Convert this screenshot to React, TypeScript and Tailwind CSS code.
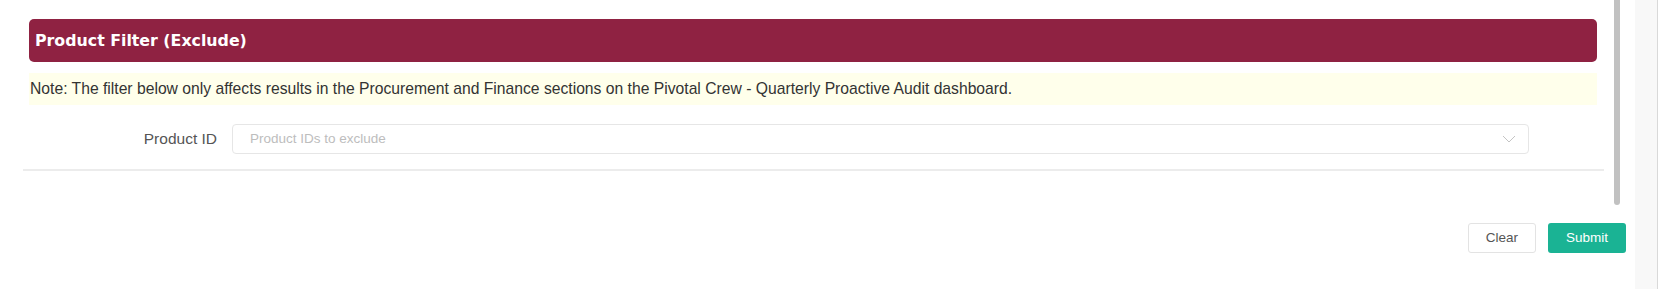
export default function App() {
  return (
    <div className="flex h-[289px] w-[1659px] overflow-hidden bg-white font-['Liberation_Sans',Arial,sans-serif]">
      {/* Main panel */}
      <div className="flex w-[1635px] flex-col">
        <div className="flex h-[205px]">
          <div className="ml-[23px] flex w-[1581px] flex-col">
            {/* Section header */}
            <div className="ml-[6px] mr-[7px] mt-[19px] flex h-[43px] items-center rounded-[5px] bg-[#8f2242] pl-[6px]">
              <span className="font-['DejaVu_Sans',Verdana,sans-serif] text-[15.8px] font-bold text-white">
                Product Filter (Exclude)
              </span>
            </div>

            {/* Note */}
            <div className="ml-[6px] mr-[7px] mt-[11px] flex h-[32px] items-center bg-[#ffffeb] pl-[1px] text-[15.7px] text-[#333]">
              Note: The filter below only affects results in the Procurement and Finance sections on the Pivotal Crew - Quarterly Proactive Audit dashboard.
            </div>

            {/* Form row */}
            <div className="mt-[19px] flex items-center">
              <label className="w-[194px] text-right text-[15.5px] text-[#555]">Product ID</label>
              <div className="ml-[15px] flex h-[30px] w-[1297px] items-center justify-between rounded-[4px] border border-[#e6e6e6] pl-[17px] pr-[12px]">
                <span className="text-[13.5px] text-[#bdbdbd]">Product IDs to exclude</span>
                <svg width="14" height="8" viewBox="0 0 14 8" fill="none">
                  <path d="M1 1l6 6 6-6" stroke="#c4c4c4" strokeWidth="1" />
                </svg>
              </div>
            </div>

            <div className="mt-[15px] h-[2px] bg-[#ececec]" />
          </div>

          {/* Scrollbar thumb */}
          <div className="ml-[10px] h-[205px] w-[6px] rounded-b-full bg-[#c1c1c1]" />
        </div>

        {/* Actions */}
        <div className="mt-[18px] flex justify-end gap-[12px] pr-[9px]">
          <button className="h-[30px] w-[68px] rounded-[3px] border border-[#e3e3e3] bg-white text-[13.5px] text-[#555]">
            Clear
          </button>
          <button className="h-[30px] w-[78px] rounded-[3px] bg-[#1ab394] text-[13.5px] text-white">
            Submit
          </button>
        </div>
      </div>

      {/* Right gutter */}
      <div className="w-[22px] bg-[#f8f8f8]" />
      <div className="w-[1px] bg-[#d9d9d9]" />
      <div className="w-[1px] bg-white" />
    </div>
  );
}
